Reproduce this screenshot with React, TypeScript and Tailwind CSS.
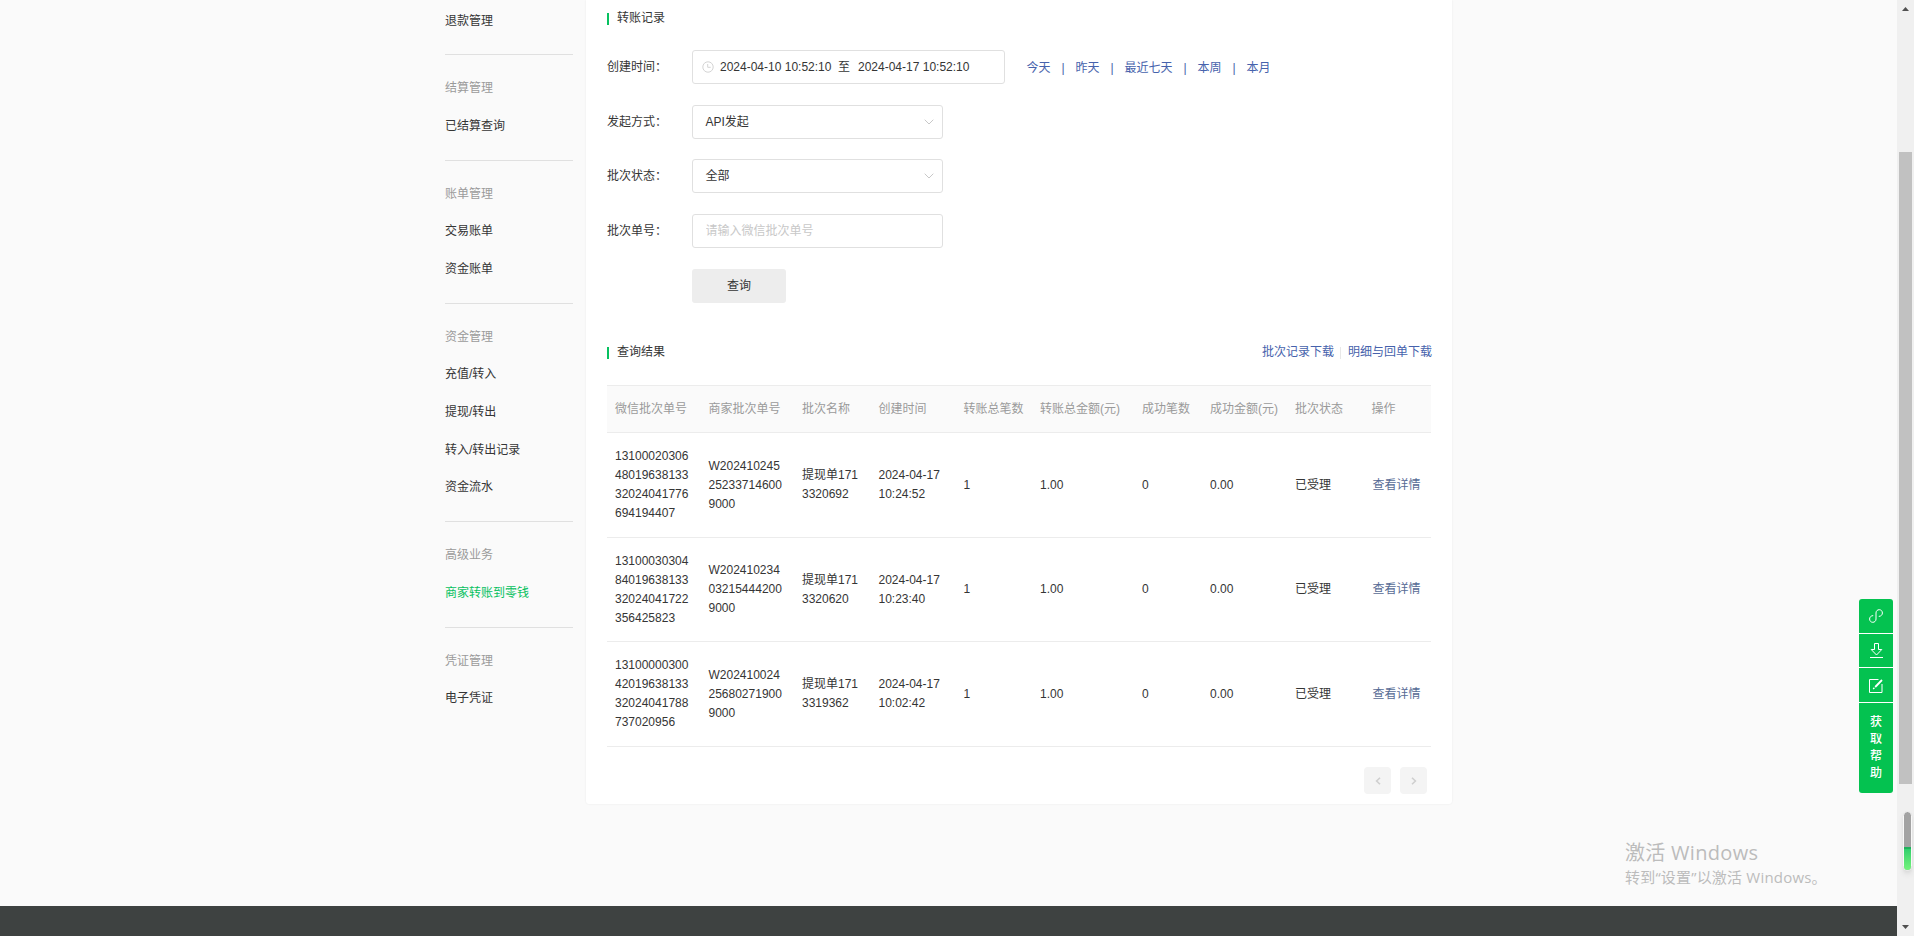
import clsx from 'clsx'
import type { ReactNode } from 'react'

const menu = [
  { title: '', items: ['退款管理'] },
  { title: '结算管理', items: ['已结算查询'] },
  { title: '账单管理', items: ['交易账单', '资金账单'] },
  { title: '资金管理', items: ['充值/转入', '提现/转出', '转入/转出记录', '资金流水'] },
  { title: '高级业务', items: ['商家转账到零钱'] },
  { title: '凭证管理', items: ['电子凭证'] },
]
const activeItem = '商家转账到零钱'

const columns = [
  { name: '微信批次单号', width: 'w-[93.5px]' },
  { name: '商家批次单号', width: 'w-[93.5px]' },
  { name: '批次名称', width: 'w-[76.5px]' },
  { name: '创建时间', width: 'w-[85px]' },
  { name: '转账总笔数', width: 'w-[76.5px]' },
  { name: '转账总金额(元)', width: 'w-[102px]' },
  { name: '成功笔数', width: 'w-[68px]' },
  { name: '成功金额(元)', width: 'w-[85px]' },
  { name: '批次状态', width: 'w-[76.5px]' },
  { name: '操作', width: 'w-[67.5px]' },
]

const rows = [
  ['131000203064801963813332024041776694194407', 'W202410245252337146009000', '提现单1713320692', '2024-04-17 10:24:52'],
  ['131000303048401963813332024041722356425823', 'W202410234032154442009000', '提现单1713320620', '2024-04-17 10:23:40'],
  ['131000003004201963813332024041788737020956', 'W202410024256802719009000', '提现单1713319362', '2024-04-17 10:02:42'],
]

const shortcuts = ['今天', '昨天', '最近七天', '本周', '本月']

function Sidebar() {
  return (
    <aside className="w-32 shrink-0 pt-[1.6px]">
      {menu.map((group, i) => (
        <ul
          key={i}
          className={clsx('pb-[15px]', i > 0 && 'pt-[14px]', i < menu.length - 1 && 'border-b border-[#e0e0e0]')}
        >
          {group.title && <li className="h-[37.7px] leading-[38.4px] text-[#9a9a9a]">{group.title}</li>}
          {group.items.map((item) => (
            <li
              key={item}
              className={clsx('h-[37.7px] leading-[38.4px]', item === activeItem ? 'text-[#07c160]' : 'text-[#353535]')}
            >
              {item}
            </li>
          ))}
        </ul>
      ))}
    </aside>
  )
}

function SectionTitle({ children }: { children: ReactNode }) {
  return (
    <h2 className="flex h-3 items-center gap-2">
      <span className="mt-0.5 h-3 w-0.5 bg-[#07c160]" />
      <span>{children}</span>
    </h2>
  )
}

function Field({ label, children }: { label: string; children: ReactNode }) {
  return (
    <div className="flex h-[34px] items-center">
      <label className="w-[85px] shrink-0">{label}：</label>
      {children}
    </div>
  )
}

function Select({ value }: { value: string }) {
  return (
    <div className="flex h-[34px] w-[251px] items-center justify-between rounded-[3px] border border-[#e0e0e0] pl-[12.5px] pr-[8px]">
      <span>{value}</span>
      <svg width="10" height="6" viewBox="0 0 10 6" fill="none" stroke="#c8c8c8">
        <path d="M0.7 0.7L5 5L9.3 0.7" />
      </svg>
    </div>
  )
}

function DateRange() {
  return (
    <div className="flex h-[34px] w-[313px] items-center rounded-[3px] border border-[#e0e0e0] pl-[9px]">
      <svg width="12" height="12" viewBox="0 0 12 12" fill="none" stroke="#d4d4d4">
        <circle cx="6" cy="6" r="5.2" />
        <path d="M5.7 3v3.3h3" />
      </svg>
      <span className="ml-1.5 w-[111px] whitespace-nowrap">2024-04-10 10:52:10</span>
      <span className="ml-[7px] w-3">至</span>
      <span className="ml-2 whitespace-nowrap">2024-04-17 10:52:10</span>
    </div>
  )
}

function Cell({ children, className }: { children: ReactNode; className?: string }) {
  return <td className={clsx('break-all pl-2 pr-[9px] align-middle', className)}>{children}</td>
}

function ResultTable() {
  return (
    <table className="mt-[27px] w-[824px] table-fixed border-collapse text-left">
      <thead>
        <tr className="h-[47px] border-y border-[#ececec] bg-[#fafafa] text-[#9a9a9a]">
          {columns.map((col) => (
            <th key={col.name} className={clsx('whitespace-nowrap pl-2 font-normal', col.width)}>
              {col.name}
            </th>
          ))}
        </tr>
      </thead>
      <tbody className="leading-[19px]">
        {rows.map(([batchNo, merchantNo, name, time]) => (
          <tr key={batchNo} className="border-b border-[#ececec] odd:h-[105px] even:h-[104px]">
            <Cell>{batchNo}</Cell>
            <Cell>{merchantNo}</Cell>
            <Cell>{name}</Cell>
            <td className="pl-2 pr-2">{time}</td>
            <Cell>1</Cell>
            <Cell>1.00</Cell>
            <Cell>0</Cell>
            <Cell>0.00</Cell>
            <Cell>已受理</Cell>
            <td className="whitespace-nowrap pl-[9px] text-[#576b95]">查看详情</td>
          </tr>
        ))}
      </tbody>
    </table>
  )
}

function PageButton({ d }: { d: string }) {
  return (
    <button className="flex size-[27px] items-center justify-center rounded-sm bg-[#f4f4f4]">
      <svg width="6" height="8" viewBox="0 0 6 8" fill="none" stroke="#cfcfcf" strokeWidth="1.6">
        <path d={d} />
      </svg>
    </button>
  )
}

function FloatTools() {
  return (
    <div className="absolute left-[1859px] top-[599px] flex w-[34px] flex-col gap-px overflow-hidden rounded-[3px] bg-white text-white">
      <div className="flex h-[34px] items-center justify-center bg-[#04c250]">
        <svg width="14" height="14" viewBox="0 0 14 14" fill="none" stroke="currentColor" strokeLinecap="round">
          <path d="M3.8 6.6C1.8 6.8 0.6 8.3 0.6 10C0.6 12 2 13.3 3.8 13.3S7 12 7 10V4C7 2 8.4 0.7 10.2 0.7S13.4 2 13.4 4C13.4 5.7 12.2 7.2 10.2 7.4" />
        </svg>
      </div>
      <div className="flex h-[33px] items-center justify-center bg-[#04c250]">
        <svg width="13" height="15" viewBox="0 0 13 15" fill="none" stroke="currentColor">
          <path d="M4.5 0.5h4v6h3.3L6.5 12L1.2 6.5h3.3zM0 14.5h13" />
        </svg>
      </div>
      <div className="flex h-[34px] items-center justify-center bg-[#04c250] pt-0.5">
        <svg width="14" height="14" viewBox="0 0 14 14" fill="none" stroke="currentColor">
          <path d="M9.5 0.5h-9v13h12.5v-8.5" />
          <path d="M6.2 8L13 1" strokeWidth="1.8" />
          <path d="M4.2 10L5.4 8.8" strokeWidth="1.4" />
        </svg>
      </div>
      <div className="flex h-[90px] flex-col items-center justify-center bg-[#04c250] pb-px font-medium leading-[17px]">
        <span>获</span>
        <span>取</span>
        <span>帮</span>
        <span>助</span>
      </div>
    </div>
  )
}

function ScrollBar() {
  return (
    <div className="relative flex h-[936px] w-[17px] shrink-0 flex-col items-center bg-[#f0f0f0]">
      <svg className="mt-[7px]" width="7" height="4" viewBox="0 0 7 4" fill="#505050">
        <path d="M3.5 0L7 4H0z" />
      </svg>
      <div className="mt-[141px] h-[632px] w-[13px] bg-[#c1c1c1]" />
      <svg className="mt-[141px]" width="7" height="4" viewBox="0 0 7 4" fill="#505050">
        <path d="M0 0h7L3.5 4z" />
      </svg>
      <div className="absolute left-1.5 top-[811px] flex h-[60px] w-[9px] flex-col overflow-hidden rounded-full border border-[#f8f8f8] bg-[#a3a3a3] shadow-md">
        <div className="mt-auto h-[23px] border-t-2 border-[#20b15c] bg-linear-to-b from-[#2fcf6c] to-[#74f47c]" />
      </div>
    </div>
  )
}

export default function App() {
  return (
    <div className="relative flex h-[936px] w-[1914px] overflow-hidden bg-[#fafafa] font-['Liberation_Sans','Noto_Sans_CJK_SC',sans-serif] text-xs text-[#353535]">
      <div className="flex flex-1 flex-col justify-between">
        <div className="mx-auto flex w-[1007px] gap-[13px]">
          <Sidebar />
          <main className="h-[804px] w-[866px] rounded-b-[3px] bg-white pl-[21px] pr-[21px] pt-3 shadow-[0_0_2px_rgba(0,0,0,0.08)]">
            <SectionTitle>转账记录</SectionTitle>
            <form className="mt-[26px]">
              <div className="flex items-center gap-[21.5px]">
                <Field label="创建时间">
                  <DateRange />
                </Field>
                <div className="flex pt-0.5 text-[#4662ac]">
                  {shortcuts.map((text, i) => (
                    <span key={text} className="whitespace-nowrap">
                      {i > 0 && <span className="inline-block w-[25px] text-center">|</span>}
                      {text}
                    </span>
                  ))}
                </div>
              </div>
              <div className="mt-[21px]">
                <Field label="发起方式">
                  <Select value="API发起" />
                </Field>
              </div>
              <div className="mt-5">
                <Field label="批次状态">
                  <Select value="全部" />
                </Field>
              </div>
              <div className="mt-[21px]">
                <Field label="批次单号">
                  <input
                    className="h-[34px] w-[251px] rounded-[3px] border border-[#e0e0e0] px-[12.5px] placeholder:text-[#c8c8c8]"
                    placeholder="请输入微信批次单号"
                  />
                </Field>
              </div>
              <button type="button" className="ml-[85px] mt-[21px] h-[34px] w-[94px] rounded-[3px] bg-[#ededed] pb-px">
                查询
              </button>
            </form>
            <div className="mt-[43px] flex items-center justify-between">
              <SectionTitle>查询结果</SectionTitle>
              <div className="-mr-px flex h-3 items-center text-[#4662ac]">
                <span>批次记录下载</span>
                <span className="ml-1.5 mr-[7px] mt-0.5 h-3 w-px bg-[#e8e8e8]" />
                <span>明细与回单下载</span>
              </div>
            </div>
            <ResultTable />
            <div className="mt-5 flex justify-end gap-[9px] pr-1">
              <PageButton d="M5 0.7L1.6 4L5 7.3" />
              <PageButton d="M1 0.7L4.4 4L1 7.3" />
            </div>
          </main>
        </div>
        <footer className="h-[30px] bg-[#3e4241]" />
      </div>
      <ScrollBar />
      <FloatTools />
      <div className="absolute left-[1625px] top-[839px] whitespace-nowrap font-['Open_Sans','Noto_Sans_CJK_SC',sans-serif] text-[#bcbcbc]">
        <p className="text-xl leading-7 tracking-[0.3px]">激活 Windows</p>
        <p className="text-[15px] leading-5 tracking-[0.2px]">转到“设置”以激活 Windows。</p>
      </div>
    </div>
  )
}
